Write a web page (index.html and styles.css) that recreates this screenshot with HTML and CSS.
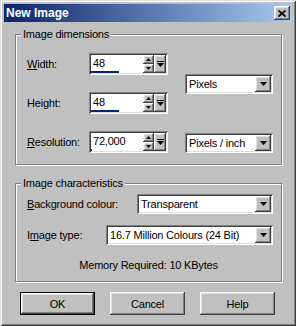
FILE: index.html
```html
<!DOCTYPE html>
<html lang="en">
<head>
    <meta charset="UTF-8">
    <title>New Image</title>
    <link rel="stylesheet" href="styles.css">
</head>
<body>
    <div class="window">
        <div class="titlebar">
            <span class="title">New Image</span>
            <button class="close" aria-label="Close">
                <svg width="8" height="7" viewBox="0 0 8 7"><path d="M0.5 0.5L7.5 6.5M7.5 0.5L0.5 6.5" stroke="#000" stroke-width="1.7"/></svg>
            </button>
        </div>
        <div class="content">
            <fieldset class="group dims">
                <legend>Image dimensions</legend>
                <div class="dims-grid">
                    <label class="lbl r1"><u>W</u>idth:</label>
                    <div class="spin r1">
                        <div class="spin-field">
                            <span class="spin-text">48</span>
                            <span class="spin-bar"><span class="spin-fill" style="width:28px"></span></span>
                        </div>
                        <div class="spin-arrows">
                            <span class="sbtn"><svg width="5" height="3" viewBox="0 0 5 3"><path d="M2.5 0L5 3H0z"/></svg></span>
                            <span class="sbtn"><svg width="5" height="3" viewBox="0 0 5 3"><path d="M0 0H5L2.5 3z"/></svg></span>
                        </div>
                        <span class="sbtn drop"><svg width="7" height="6" viewBox="0 0 7 6"><path d="M0 0H7V1H0z M0 2H7L3.5 6z"/></svg></span>
                    </div>

                    <label class="lbl r2">Height:</label>
                    <div class="spin r2">
                        <div class="spin-field">
                            <span class="spin-text">48</span>
                            <span class="spin-bar"><span class="spin-fill" style="width:28px"></span></span>
                        </div>
                        <div class="spin-arrows">
                            <span class="sbtn"><svg width="5" height="3" viewBox="0 0 5 3"><path d="M2.5 0L5 3H0z"/></svg></span>
                            <span class="sbtn"><svg width="5" height="3" viewBox="0 0 5 3"><path d="M0 0H5L2.5 3z"/></svg></span>
                        </div>
                        <span class="sbtn drop"><svg width="7" height="6" viewBox="0 0 7 6"><path d="M0 0H7V1H0z M0 2H7L3.5 6z"/></svg></span>
                    </div>

                    <div class="combo unit">
                        <span class="combo-text">Pixels</span>
                        <span class="combo-btn"><svg width="7" height="4" viewBox="0 0 7 4"><path d="M0 0H7L3.5 4z"/></svg></span>
                    </div>

                    <label class="lbl r3"><u>R</u>esolution:</label>
                    <div class="spin r3">
                        <div class="spin-field">
                            <span class="spin-text">72,000</span>
                            <span class="spin-bar"><span class="spin-fill" style="width:1px"></span></span>
                        </div>
                        <div class="spin-arrows">
                            <span class="sbtn"><svg width="5" height="3" viewBox="0 0 5 3"><path d="M2.5 0L5 3H0z"/></svg></span>
                            <span class="sbtn"><svg width="5" height="3" viewBox="0 0 5 3"><path d="M0 0H5L2.5 3z"/></svg></span>
                        </div>
                        <span class="sbtn drop"><svg width="7" height="6" viewBox="0 0 7 6"><path d="M0 0H7V1H0z M0 2H7L3.5 6z"/></svg></span>
                    </div>

                    <div class="combo resunit">
                        <span class="combo-text">Pixels / inch</span>
                        <span class="combo-btn"><svg width="7" height="4" viewBox="0 0 7 4"><path d="M0 0H7L3.5 4z"/></svg></span>
                    </div>
                </div>
            </fieldset>

            <fieldset class="group chars">
                <legend>Image characteristics</legend>
                <div class="row">
                    <label class="lbl"><u>B</u>ackground colour:</label>
                    <div class="combo bgcolour">
                        <span class="combo-text">Transparent</span>
                        <span class="combo-btn"><svg width="7" height="4" viewBox="0 0 7 4"><path d="M0 0H7L3.5 4z"/></svg></span>
                    </div>
                </div>
                <div class="row">
                    <label class="lbl">I<u>m</u>age type:</label>
                    <div class="combo imgtype">
                        <span class="combo-text">16.7 Million Colours (24 Bit)</span>
                        <span class="combo-btn"><svg width="7" height="4" viewBox="0 0 7 4"><path d="M0 0H7L3.5 4z"/></svg></span>
                    </div>
                </div>
                <p class="memory">Memory Required: 10 KBytes</p>
            </fieldset>

            <div class="buttons">
                <button class="btn default">OK</button>
                <button class="btn">Cancel</button>
                <button class="btn">Help</button>
            </div>
        </div>
    </div>
</body>
</html>
```

FILE: styles.css
```css
body {
    margin: 0;
    font-family: "Liberation Sans", Arial, sans-serif;
    font-size: 11px;
    letter-spacing: -0.2px;
    color: #000;
    background-color: #c0c0c0;
}
.window {
    width: 296px;
    height: 326px;
    box-sizing: border-box;
    padding: 4px;
    background-color: #c0c0c0;
    box-shadow: inset 1px 1px #dfdfdf, inset -1px -1px #404040, inset 2px 2px #fff, inset -2px -2px #808080;
}
.titlebar {
    height: 18px;
    display: flex;
    align-items: center;
    justify-content: space-between;
    padding: 0 2px;
    background: linear-gradient(to right, #0a246a, #a6caf0);
}
.title {
    color: #fff;
    font-weight: bold;
    font-size: 12px;
    letter-spacing: 0;
    line-height: 18px;
}
.close,
.btn,
.sbtn,
.combo-btn {
    background-color: #c0c0c0;
    box-shadow: inset -1px -1px #404040, inset 1px 1px #fff, inset -2px -2px #808080, inset 2px 2px #dfdfdf;
}
.close {
    width: 16px;
    height: 14px;
    border: 0;
    padding: 0;
    display: flex;
    align-items: center;
    justify-content: center;
}
.content {
    padding: 6px 10px 0 11px;
}
.group {
    box-sizing: border-box;
    width: 267px;
    min-width: 0;
    margin: 0;
    border: 1px solid #808080;
    box-shadow: inset 1px 1px #fff, 1px 1px #fff;
}
.group legend {
    padding: 0 2px;
    margin-left: -6px;
    line-height: 13px;
    background-color: #c0c0c0;
}
.dims {
    padding: 12px 8px 11px 11px;
}
.chars {
    margin-top: 12px;
    padding: 4px 8px 9px 11px;
}
.dims-grid {
    display: grid;
    grid-template-columns: 62px 79px 17px 88px;
    grid-template-rows: 22px 22px 22px;
    row-gap: 17px;
    align-items: center;
}
.lbl { grid-column: 1; }
.spin { grid-column: 2; }
.r1 { grid-row: 1; }
.r2 { grid-row: 2; }
.r3 { grid-row: 3; }
.unit {
    grid-column: 4;
    grid-row: 1 / span 2;
}
.resunit {
    grid-column: 4;
    grid-row: 3;
    align-self: end;
}
.spin,
.combo {
    display: flex;
    box-sizing: border-box;
    padding: 2px;
    background-color: #fff;
    box-shadow: inset 1px 1px #808080, inset -1px -1px #fff, inset 2px 2px #404040, inset -2px -2px #dfdfdf;
}
.spin {
    height: 22px;
}
.spin-field {
    flex: 1;
    display: flex;
    flex-direction: column;
}
.spin-text {
    flex: 1;
    padding-left: 2px;
    line-height: 16px;
}
.spin-bar {
    height: 2px;
    background-color: #fff;
}
.spin-fill {
    display: block;
    height: 2px;
    background-color: #0a246a;
}
.spin-arrows {
    width: 11px;
    display: flex;
    flex-direction: column;
}
.sbtn {
    flex: 1;
    display: flex;
    align-items: center;
    justify-content: center;
}
.drop {
    flex: none;
    width: 12px;
}
.combo {
    height: 20px;
}
.combo-text {
    flex: 1;
    padding-left: 2px;
    line-height: 16px;
    white-space: nowrap;
    overflow: hidden;
}
.combo-btn {
    width: 16px;
    display: flex;
    align-items: center;
    justify-content: center;
}
.row {
    display: flex;
    justify-content: space-between;
    align-items: center;
}
.row + .row {
    margin-top: 11px;
}
.bgcolour { width: 136px; }
.imgtype { width: 167px; }
.memory {
    margin: 14px 0 0 -3px;
    line-height: 13px;
    text-align: center;
}
.buttons {
    display: flex;
    gap: 15px;
    margin-top: 10px;
    padding-left: 5px;
}
.btn {
    width: 75px;
    height: 23px;
    box-sizing: border-box;
    border: 0;
    padding: 0;
    font: inherit;
    letter-spacing: inherit;
    color: #000;
}
.btn.default {
    border: 1px solid #000;
}
```
